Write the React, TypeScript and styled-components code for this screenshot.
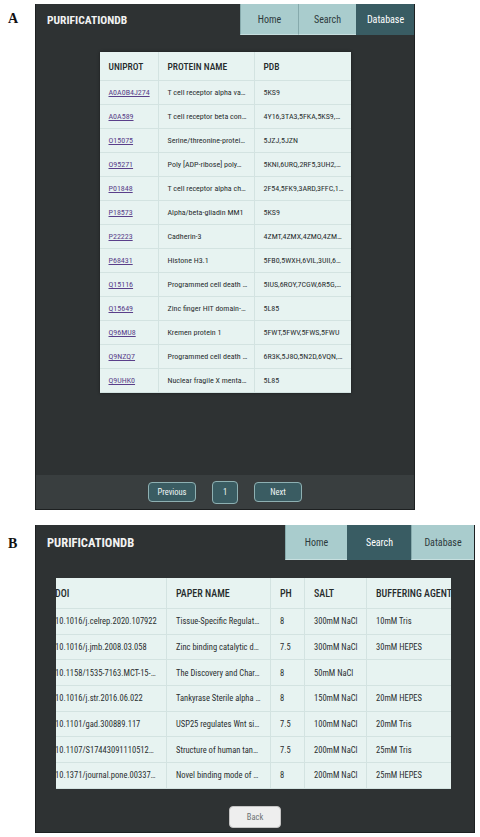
import React, { useLayoutEffect, useRef } from 'react';
import styled, { createGlobalStyle } from 'styled-components';

const FONT = '"Roboto Condensed", "Liberation Sans Narrow", "DejaVu Sans Condensed", Roboto, sans-serif';
const CELL_PAD = 9;

const GlobalStyle = createGlobalStyle`
    body {
        margin: 0;
        background: #ffffff;
        font-family: ${FONT};
    }
`;

const SFigure = styled.div`
    width: 480px;
    padding-top: 4px;
    display: flex;
    flex-direction: column;
    gap: 15px;
`;

const SPanel = styled.section`
    display: grid;
    grid-template-columns: 35px auto;
    align-items: start;
`;

const SLabel = styled.div<{ $top: number }>`
    padding: ${({ $top }) => $top}px 0 0 8px;
    font-family: 'Liberation Serif', serif;
    font-weight: 700;
    font-size: 14px;
    line-height: 1;
    color: #111;
`;

const SScreen = styled.div<{ $width: number; $height: number }>`
    width: ${({ $width }) => $width}px;
    height: ${({ $height }) => $height}px;
    box-sizing: border-box;
    display: flex;
    flex-direction: column;
    background: #2e3233;
    border: 1px solid #1d2021;
    border-top: 0;
`;

const SHeader = styled.header<{ $height: number }>`
    height: ${({ $height }) => $height}px;
    flex-shrink: 0;
    display: flex;
    align-items: stretch;
`;

const STitle = styled.div<{ $size: number }>`
    flex: 1;
    display: flex;
    align-items: center;
    padding-left: 11px;
    color: #f2f2f2;
    font-weight: 700;
    font-size: ${({ $size }) => $size}px;
`;

const SNavItem = styled.a<{ $width: number; $active?: boolean }>`
    width: ${({ $width }) => $width}px;
    display: flex;
    align-items: center;
    justify-content: center;
    font-size: 10px;
    color: ${({ $active }) => ($active ? '#ffffff' : '#2d3a3c')};
    background: ${({ $active }) => ($active ? '#395c63' : '#a9cccd')};
    border-left: 1px solid ${({ $active }) => ($active ? '#395c63' : '#86aaac')};
    border-bottom: 1px solid ${({ $active }) => ($active ? '#395c63' : '#c7dfdf')};
    cursor: pointer;
`;

/* ---- protein list ---- */

const SMain = styled.main`
    flex: 1;
    display: flex;
    justify-content: center;
    align-items: flex-start;
    padding-top: 17px;
`;

const STable = styled.table<{ $width: number; $shadow?: boolean }>`
    width: ${({ $width }) => $width}px;
    flex-shrink: 0;
    border-collapse: collapse;
    table-layout: fixed;
    background: #e7f3f1;
    box-shadow: ${({ $shadow }) => ($shadow ? '0 0 3px rgba(0, 0, 0, 0.45)' : 'none')};
`;

const SHeadCell = styled.th<{ $width: number; $height: number; $size: number }>`
    width: ${({ $width }) => $width - CELL_PAD}px;
    height: ${({ $height }) => $height}px;
    padding: 0 0 0 ${CELL_PAD}px;
    text-align: left;
    font-weight: 500;
    font-size: ${({ $size }) => $size}px;
    color: #262b2c;
    white-space: nowrap;
    overflow: hidden;
    border-right: 1px solid #d3e3e1;
    border-bottom: 1px solid #d3e3e1;
    &:last-child {
        border-right: 0;
    }
`;

const SCell = styled.td<{ $height: number; $size: number }>`
    height: ${({ $height }) => $height}px;
    padding: 0 0 0 ${CELL_PAD}px;
    font-size: ${({ $size }) => $size}px;
    color: #2a2f30;
    white-space: nowrap;
    overflow: hidden;
    border-right: 1px solid #d3e3e1;
    border-bottom: 1px solid #d3e3e1;
    &:last-child {
        border-right: 0;
    }
`;

const SUniprotLink = styled.a`
    color: #5a3f8a;
    text-decoration: underline;
    cursor: pointer;
`;

const SPager = styled.footer`
    height: 34px;
    flex-shrink: 0;
    display: flex;
    align-items: center;
    justify-content: center;
    gap: 16px;
    background: #393e3f;
`;

const SPagerButton = styled.button<{ $width: number; $height: number }>`
    width: ${({ $width }) => $width}px;
    height: ${({ $height }) => $height}px;
    padding: 0;
    font-family: ${FONT};
    font-size: 8.5px;
    color: #f0f5f5;
    background: #3a5c62;
    border: 1px solid #8eb0b2;
    border-radius: 4px;
    cursor: pointer;
`;

/* ---- purification search results ---- */

const SResults = styled.main`
    padding: 18px 23px 0 20px;
`;

const SScroller = styled.div`
    overflow-x: auto;
    background: #e7f3f1;
    scrollbar-width: none;
    &::-webkit-scrollbar {
        display: none;
    }
`;

const SBackRow = styled.div`
    display: flex;
    justify-content: center;
    padding-top: 17px;
`;

const SBackButton = styled.button`
    width: 52px;
    height: 22px;
    padding: 0;
    font-family: ${FONT};
    font-size: 8.5px;
    color: #6d7273;
    background: #eeeeee;
    border: 1px solid #c4c4c4;
    border-radius: 4px;
    cursor: pointer;
`;

const proteins = [
    ['A0A0B4J274', 'T cell receptor alpha va…', '5KS9'],
    ['A0A589', 'T cell receptor beta con…', '4Y16,3TA3,5FKA,5KS9,…'],
    ['O15075', 'Serine/threonine-protei…', '5JZJ,5JZN'],
    ['O95271', 'Poly [ADP-ribose] poly…', '5KNI,6URQ,2RF5,3UH2,…'],
    ['P01848', 'T cell receptor alpha ch…', '2F54,5FK9,3ARD,3FFC,1…'],
    ['P18573', 'Alpha/beta-gliadin MM1', '5KS9'],
    ['P22223', 'Cadherin-3', '4ZMT,4ZMX,4ZMO,4ZM…'],
    ['P68431', 'Histone H3.1', '5FB0,5WXH,6VIL,3UII,6…'],
    ['Q15116', 'Programmed cell death …', '5IUS,6ROY,7CGW,6R5G,…'],
    ['Q15649', 'Zinc finger HIT domain-…', '5L85'],
    ['Q96MU8', 'Kremen protein 1', '5FWT,5FWV,5FWS,5FWU'],
    ['Q9NZQ7', 'Programmed cell death …', '6R3K,5J8O,5N2D,6VQN,…'],
    ['Q9UHK0', 'Nuclear fragile X menta…', '5L85'],
];

const papers = [
    ['10.1016/j.celrep.2020.107922', 'Tissue-Specific Regulat…', '8', '300mM NaCl', '10mM Tris'],
    ['10.1016/j.jmb.2008.03.058', 'Zinc binding catalytic d…', '7.5', '300mM NaCl', '30mM HEPES'],
    ['10.1158/1535-7163.MCT-15-…', 'The Discovery and Char…', '8', '50mM NaCl', ''],
    ['10.1016/j.str.2016.06.022', 'Tankyrase Sterile alpha …', '8', '150mM NaCl', '20mM HEPES'],
    ['10.1101/gad.300889.117', 'USP25 regulates Wnt si…', '7.5', '100mM NaCl', '20mM Tris'],
    ['10.1107/S17443091110512…', 'Structure of human tan…', '7.5', '200mM NaCl', '25mM Tris'],
    ['10.1371/journal.pone.00337…', 'Novel binding mode of …', '8', '200mM NaCl', '25mM HEPES'],
];

const proteinCols = [
    { label: 'UNIPROT', width: 58 },
    { label: 'PROTEIN NAME', width: 95 },
    { label: 'PDB', width: 96 },
];

const paperCols = [
    { label: 'DOI', width: 120 },
    { label: 'PAPER NAME', width: 103 },
    { label: 'PH', width: 33 },
    { label: 'SALT', width: 61 },
    { label: 'BUFFERING AGENT', width: 100 },
];

const sumWidths = (cols: { width: number }[]) => cols.reduce((acc, c) => acc + c.width, 0);

type NavProps = {
    active: 'Home' | 'Search' | 'Database';
    widths: [number, number, number];
};

const Nav = ({ active, widths }: NavProps) => (
    <>
        {(['Home', 'Search', 'Database'] as const).map((item, i) => (
            <SNavItem key={item} $width={widths[i]} $active={item === active}>
                {item}
            </SNavItem>
        ))}
    </>
);

const ProteinList = () => (
    <SScreen $width={380} $height={506}>
        <SHeader $height={31}>
            <STitle $size={11.5}>PURIFICATIONDB</STitle>
            <Nav active="Database" widths={[57, 57, 57]} />
        </SHeader>
        <SMain>
            <STable $width={sumWidths(proteinCols)} $shadow>
                <thead>
                    <tr>
                        {proteinCols.map((col) => (
                            <SHeadCell key={col.label} $width={col.width} $height={28} $size={9.5}>
                                {col.label}
                            </SHeadCell>
                        ))}
                    </tr>
                </thead>
                <tbody>
                    {proteins.map(([id, name, pdb]) => (
                        <tr key={id}>
                            <SCell $height={23} $size={8}>
                                <SUniprotLink>{id}</SUniprotLink>
                            </SCell>
                            <SCell $height={23} $size={8}>{name}</SCell>
                            <SCell $height={23} $size={8}>{pdb}</SCell>
                        </tr>
                    ))}
                </tbody>
            </STable>
        </SMain>
        <SPager>
            <SPagerButton $width={48} $height={20}>Previous</SPagerButton>
            <SPagerButton $width={26} $height={23}>1</SPagerButton>
            <SPagerButton $width={48} $height={20}>Next</SPagerButton>
        </SPager>
    </SScreen>
);

const SearchResults = () => {
    const scrollerRef = useRef<HTMLDivElement>(null);

    // the results table is wider than the panel, it sits a little scrolled
    useLayoutEffect(() => {
        if (scrollerRef.current) scrollerRef.current.scrollLeft = 10;
    }, []);

    return (
        <SScreen $width={440} $height={308}>
            <SHeader $height={35}>
                <STitle $size={12.5}>PURIFICATIONDB</STitle>
                <Nav active="Search" widths={[61, 63, 62]} />
            </SHeader>
            <SResults>
                <SScroller ref={scrollerRef}>
                    <STable $width={sumWidths(paperCols)}>
                        <thead>
                            <tr>
                                {paperCols.map((col) => (
                                    <SHeadCell key={col.label} $width={col.width} $height={30} $size={10}>
                                        {col.label}
                                    </SHeadCell>
                                ))}
                            </tr>
                        </thead>
                        <tbody>
                            {papers.map((row) => (
                                <tr key={row[0]}>
                                    {row.map((value, i) => (
                                        <SCell key={i} $height={24.7} $size={8.5}>
                                            {value}
                                        </SCell>
                                    ))}
                                </tr>
                            ))}
                        </tbody>
                    </STable>
                </SScroller>
            </SResults>
            <SBackRow>
                <SBackButton>Back</SBackButton>
            </SBackRow>
        </SScreen>
    );
};

export default function App() {
    return (
        <>
            <GlobalStyle />
            <SFigure>
                <SPanel>
                    <SLabel $top={8}>A</SLabel>
                    <ProteinList />
                </SPanel>
                <SPanel>
                    <SLabel $top={12}>B</SLabel>
                    <SearchResults />
                </SPanel>
            </SFigure>
        </>
    );
}
